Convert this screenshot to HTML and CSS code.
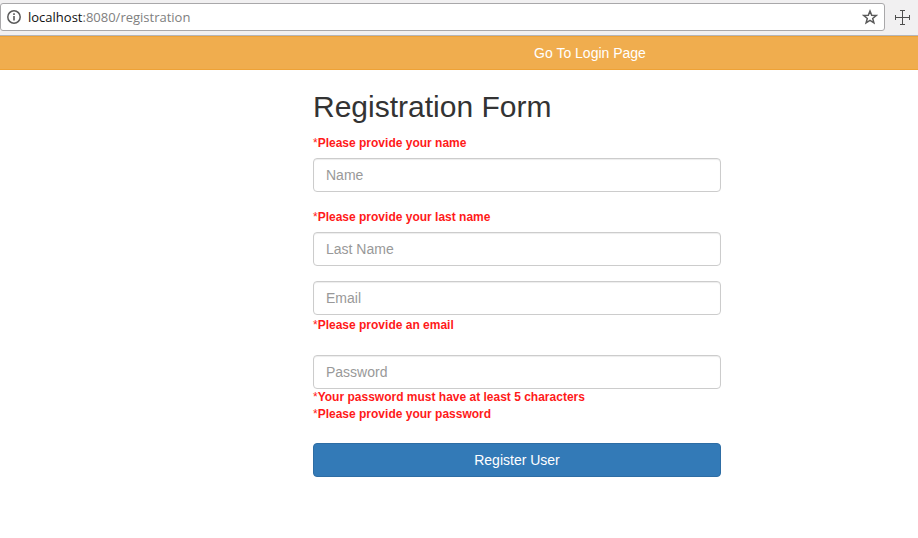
FILE: index.html
```html
<!DOCTYPE html>
<html lang="en">

<head>
    <meta charset="UTF-8">
    <meta name="viewport" content="width=device-width, initial-scale=1.0">
    <title>Registration Form</title>
    <link rel="stylesheet" href="styles.css">
</head>

<body>
    <!-- browser toolbar -->
    <header class="toolbar">
        <div class="address-bar">
            <svg class="icon" width="16" height="16" viewBox="0 0 16 16">
                <circle cx="8" cy="8" r="6.2" fill="none" stroke="#5a5a5a" stroke-width="1.5"/>
                <path d="M7.2 4.3h1.6v1.6H7.2zM7.2 7h1.6v4.6H7.2z" fill="#5a5a5a"/>
            </svg>
            <div class="url"><span class="host">localhost</span>:8080/registration</div>
            <button class="icon-button" type="button" aria-label="Bookmark">
                <svg class="icon" width="16" height="16" viewBox="0 0 16 16">
                    <path d="M8 2l1.7 4.2 4.5.3-3.5 2.9 1.2 4.4L8 11.4l-3.9 2.4 1.2-4.4-3.5-2.9 4.5-.3z" fill="none" stroke="#5a5a5a" stroke-width="1.5"/>
                </svg>
            </button>
        </div>
        <button class="icon-button" type="button" aria-label="Extension">
            <svg class="icon" width="16" height="16" viewBox="0 0 16 16">
                <path d="M1 8.5h14M8.5 1v14M6 1.5h5M6 15.5h5M1.5 6v5M15.5 6v5" fill="none" stroke="#4d4d4d"/>
            </svg>
        </button>
    </header>

    <button class="btn btn-warning" type="button">Go To Login Page</button>

    <main class="container">
        <form class="form">
            <h2>Registration Form</h2>

            <div class="form-group">
                <label class="validation-message above" for="name"><span>*</span>Please provide your name</label>
                <input class="form-control" type="text" id="name" placeholder="Name">
            </div>

            <div class="form-group">
                <label class="validation-message above" for="lastName"><span>*</span>Please provide your last name</label>
                <input class="form-control" type="text" id="lastName" placeholder="Last Name">
            </div>

            <div class="form-group">
                <input class="form-control" type="text" id="email" placeholder="Email">
                <label class="validation-message below" for="email"><span>*</span>Please provide an email</label>
            </div>

            <div class="form-group">
                <input class="form-control" type="password" id="password" placeholder="Password">
                <label class="validation-message small" for="password"><span>*</span>Your password must have at least 5 characters</label>
                <label class="validation-message small" for="password"><span>*</span>Please provide your password</label>
            </div>

            <button class="btn btn-primary" type="button">Register User</button>
        </form>
    </main>
</body>

</html>
```

FILE: styles.css
```css
* {
    box-sizing: border-box;
}

body {
    margin: 0;
    font-family: Arial, "Liberation Sans", sans-serif;
    font-size: 14px;
    line-height: 20px;
    color: #333;
    background-color: #fff;
}

.toolbar {
    display: flex;
    align-items: center;
    gap: 9px;
    padding: 3px 8px 4px 0;
    background-color: #f1f0f1;
    border-bottom: 1px solid #b5b5b8;
}

.address-bar {
    display: flex;
    flex: 1;
    align-items: center;
    gap: 6px;
    height: 28px;
    padding: 0 6px 0 5px;
    background-color: #fff;
    border: 1px solid #a9a8aa;
    border-radius: 3px;
}

.url {
    flex: 1;
    font-family: "Open Sans", "Noto Sans", sans-serif;
    font-size: 13px;
    color: #808080;
}

.host {
    color: #111;
}

.icon {
    display: block;
}

.icon-button {
    padding: 0;
    background: none;
    border: none;
    cursor: pointer;
}

.btn {
    display: block;
    width: 100%;
    padding: 6px 12px;
    font-family: inherit;
    font-size: 14px;
    line-height: 20px;
    color: #fff;
    border: 1px solid transparent;
    border-radius: 4px;
    cursor: pointer;
}

.btn-warning {
    padding-left: 274px;
    background-color: #f0ad4e;
    border-color: #eea236;
    border-width: 1px 0;
    border-radius: 0;
}

.btn-primary {
    background-color: #337ab7;
    border-color: #2e6da4;
}

.container {
    padding: 20px 15px 20px 313px;
}

.form {
    max-width: 408px;
}

h2 {
    margin: 0 0 10px;
    font-size: 30px;
    font-weight: 500;
    line-height: 33px;
}

.form-group {
    margin-bottom: 15px;
}

.form-group:last-of-type {
    margin-bottom: 20px;
}

.form-control {
    display: block;
    width: 100%;
    height: 34px;
    padding: 6px 12px;
    font-family: inherit;
    font-size: 14px;
    line-height: 20px;
    color: #555;
    background-color: #fff;
    border: 1px solid #ccc;
    border-radius: 4px;
    box-shadow: inset 0 1px 1px rgba(0, 0, 0, 0.075);
}

.form-control::placeholder {
    color: #999;
}

.validation-message {
    display: block;
    font-size: 12px;
    font-weight: bold;
    color: #ff1a1a;
}

.validation-message span {
    font-weight: normal;
}

.above {
    margin-bottom: 5px;
}

.below {
    margin-bottom: 20px;
}

.small {
    line-height: 17px;
}
```
